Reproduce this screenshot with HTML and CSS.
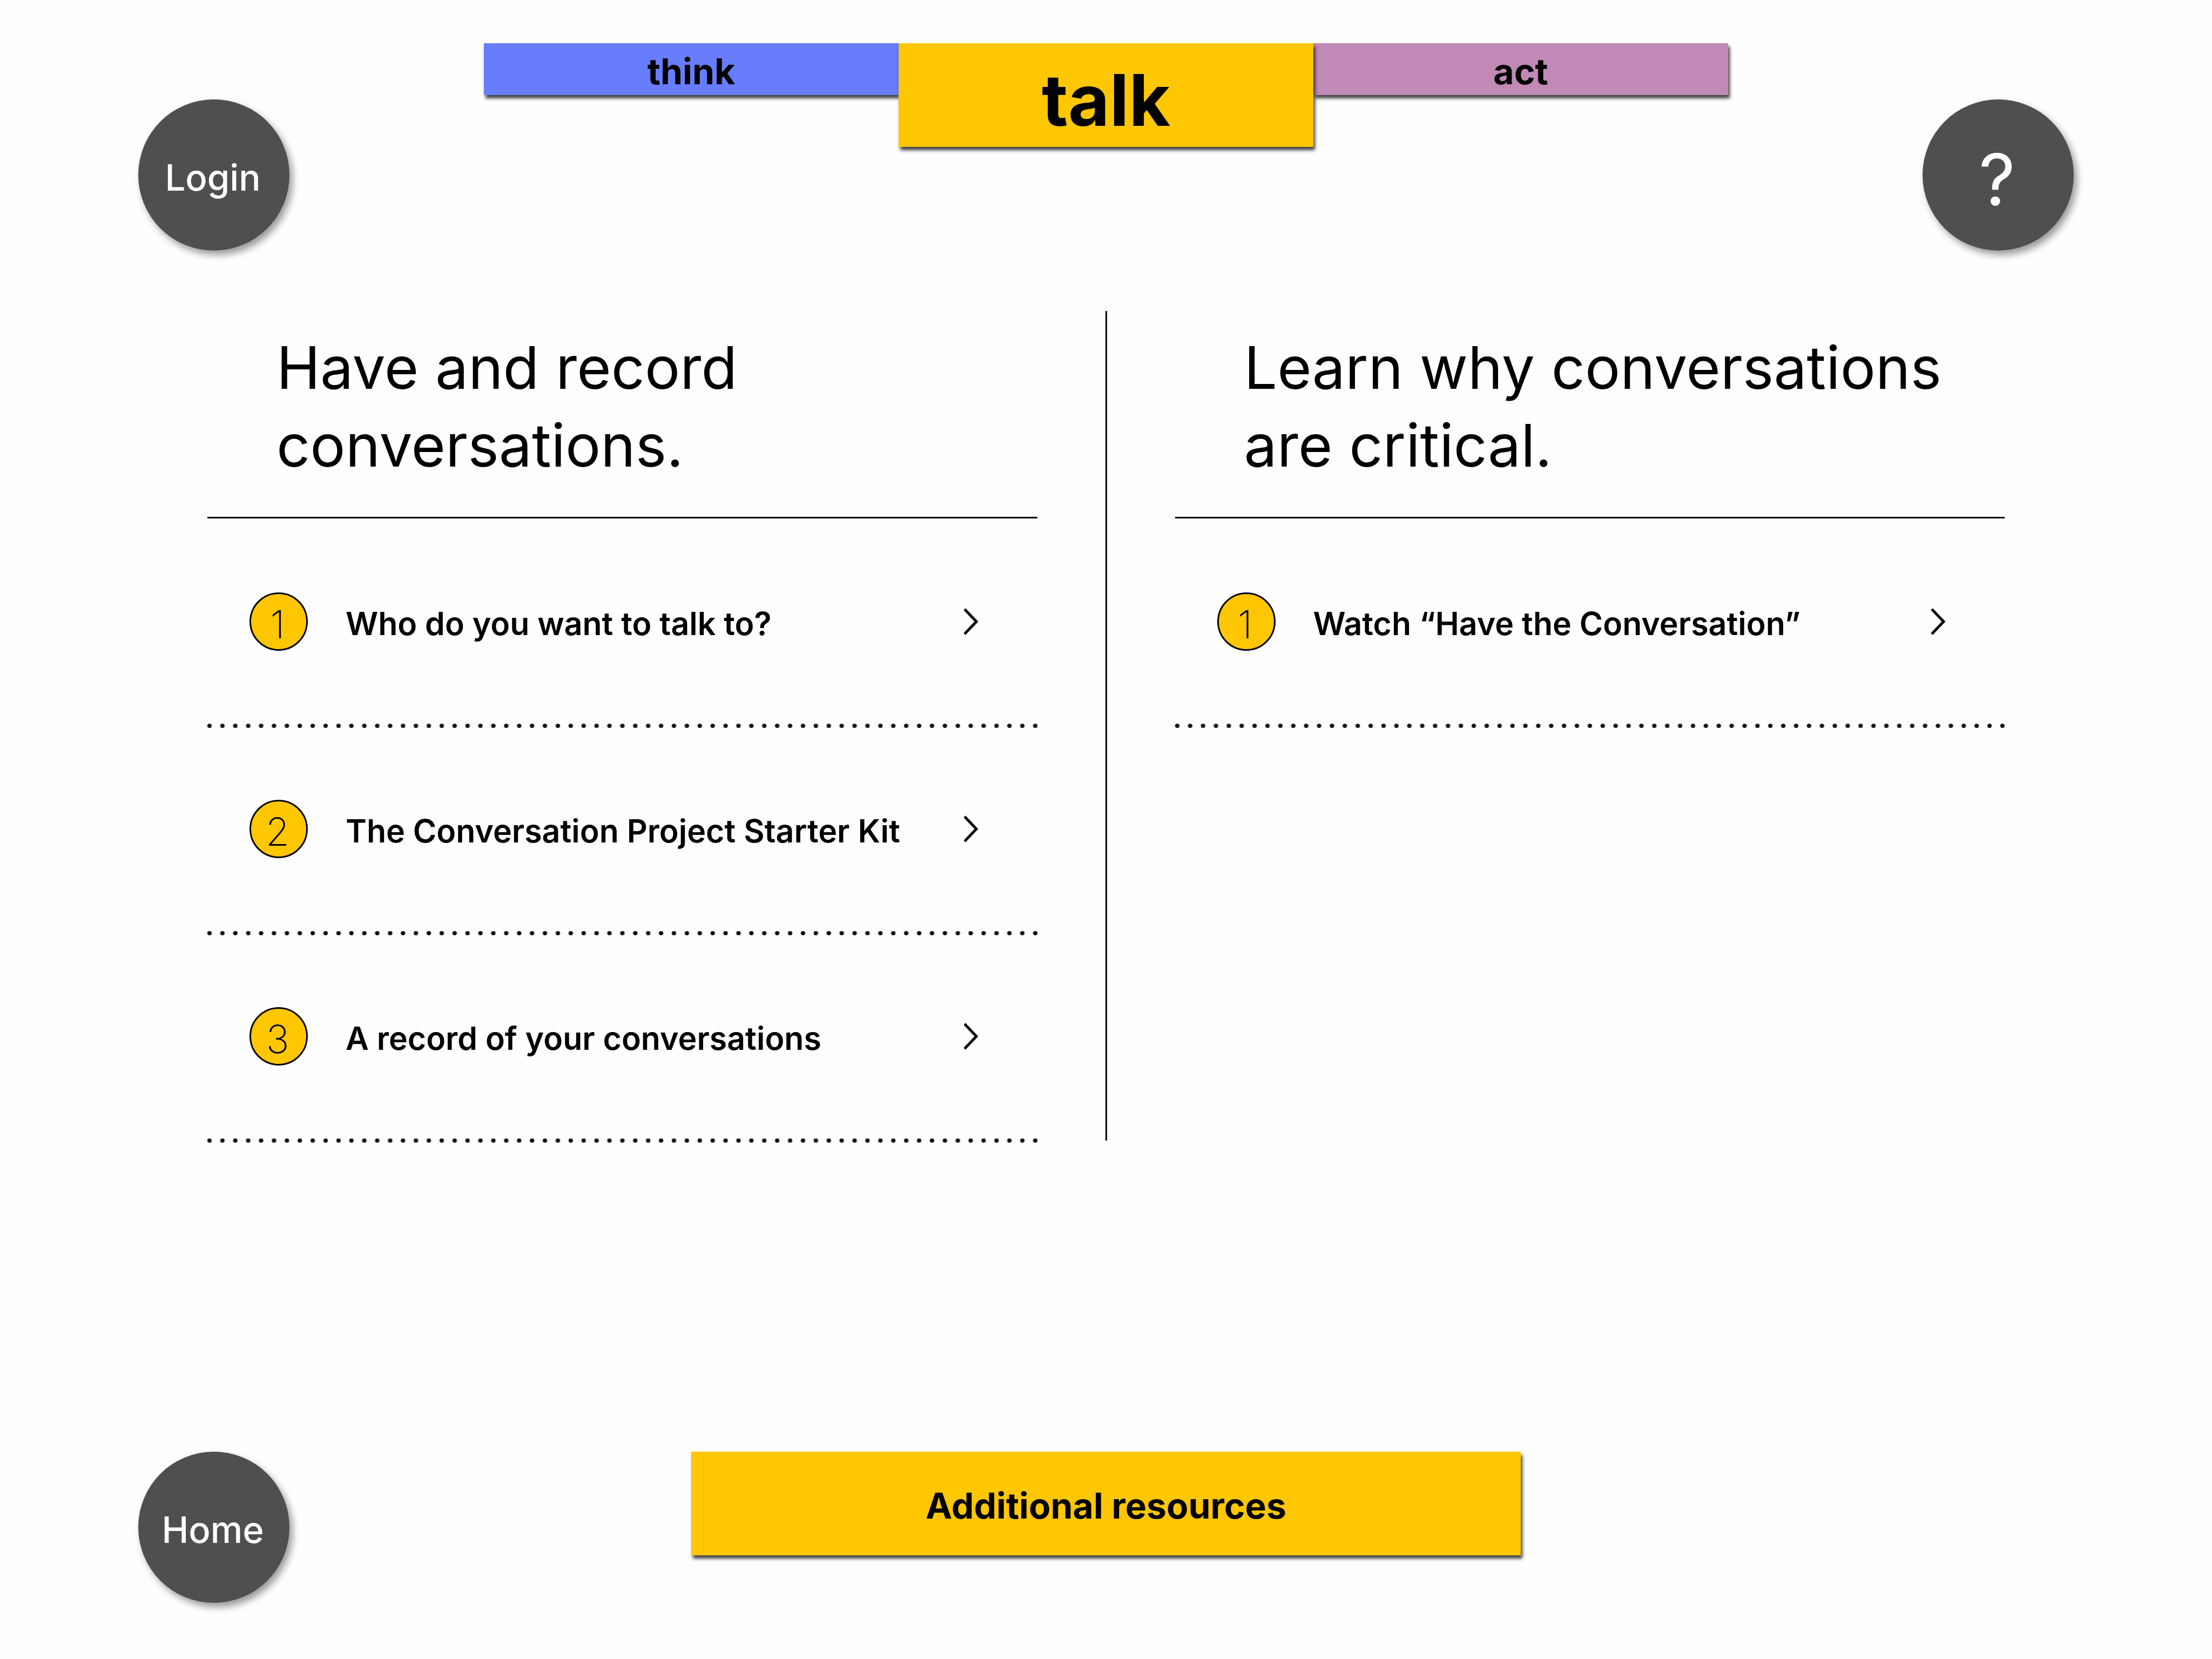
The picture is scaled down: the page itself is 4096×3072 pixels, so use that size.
FILE: index.html
```html
<!DOCTYPE html>
<html lang="en">
<head>
  <meta charset="utf-8">
  <meta name="viewport" content="width=device-width, initial-scale=1">
  <title>Talk</title>
  <link rel="stylesheet" href="styles.css">
</head>
<body>
  <header class="top">
    <button class="round" type="button">Login</button>
    <nav class="tabs">
      <a class="tab tab-think" href="#think">think</a>
      <a class="tab tab-talk" href="#talk" aria-current="page">talk</a>
      <a class="tab tab-act" href="#act">act</a>
    </nav>
    <button class="round round-help" type="button" aria-label="Help">?</button>
  </header>

  <main class="columns">
    <section class="column">
      <h2 class="heading">Have and record conversations.</h2>
      <ol class="steps">
        <li><a class="step" href="#who">
          <span class="number">1</span>
          <span class="label">Who do you want to talk to?</span>
          <svg class="chevron" viewBox="0 0 26 50" aria-hidden="true"><path d="M1 2 23 25 1 48"/></svg>
        </a></li>
        <li><a class="step" href="#kit">
          <span class="number">2</span>
          <span class="label">The Conversation Project Starter Kit</span>
          <svg class="chevron" viewBox="0 0 26 50" aria-hidden="true"><path d="M1 2 23 25 1 48"/></svg>
        </a></li>
        <li><a class="step" href="#record">
          <span class="number">3</span>
          <span class="label">A record of your conversations</span>
          <svg class="chevron" viewBox="0 0 26 50" aria-hidden="true"><path d="M1 2 23 25 1 48"/></svg>
        </a></li>
      </ol>
    </section>
    <div class="divider"></div>
    <section class="column">
      <h2 class="heading">Learn why conversations are critical.</h2>
      <ol class="steps">
        <li><a class="step" href="#watch">
          <span class="number">1</span>
          <span class="label">Watch “Have the Conversation”</span>
          <svg class="chevron" viewBox="0 0 26 50" aria-hidden="true"><path d="M1 2 23 25 1 48"/></svg>
        </a></li>
      </ol>
    </section>
  </main>

  <footer class="bottom">
    <a class="round" href="#home">Home</a>
    <button class="resources" type="button">Additional resources</button>
  </footer>
</body>
</html>
```
FILE: styles.css
```css
:root {
  --yellow: #ffc602;
  --blue: #687dfb;
  --purple: #c089b6;
  --grey: #4f4f4f;
  --line: 3px solid #000;
  --card-shadow: 3px 6px 6px rgba(0, 0, 0, 0.75);
}

* {
  box-sizing: border-box;
}

body {
  display: flex;
  flex-direction: column;
  min-height: 100vh;
  margin: 0;
  background: #fefefe;
  color: #000;
  font-family: Inter, "Liberation Sans", sans-serif;
}

a {
  color: inherit;
  text-decoration: none;
}

button {
  border: 0;
  font-family: inherit;
  color: inherit;
}

/* Header */
.top {
  display: grid;
  grid-template-columns: 5fr 18fr 5fr;
  align-items: start;
  padding: 80px 6.25% 0;
}

.round {
  display: flex;
  align-items: center;
  justify-content: center;
  width: 280px;
  height: 280px;
  padding: 8px 4px 0 0;
  border-radius: 50%;
  background: var(--grey);
  box-shadow: 6px 8px 14px rgba(0, 0, 0, 0.4);
  color: #fff;
  font-size: 67px;
  font-weight: 500;
}

.top .round {
  margin-top: 104px;
}

.round-help {
  justify-self: end;
  padding-top: 16px;
  font-size: 132px;
  font-weight: 400;
}

.tabs {
  display: grid;
  grid-template-columns: repeat(3, 1fr);
  align-items: start;
}

.tab {
  display: flex;
  align-items: center;
  justify-content: center;
  height: 96px;
  padding-top: 8px;
  box-shadow: var(--card-shadow);
  font-size: 66px;
  font-weight: 700;
}

.tab-think {
  background: var(--blue);
}

.tab-talk {
  z-index: 1;
  height: 192px;
  padding-top: 18px;
  background: var(--yellow);
  font-size: 132px;
}

.tab-act {
  background: var(--purple);
}

/* Two lists with a rule between them */
.columns {
  display: grid;
  grid-template-columns: 1fr 3px 1fr;
  column-gap: 126px;
  margin-top: 112px;
  padding: 0 9.375%;
}

.divider {
  background: #000;
}

.heading {
  margin: 0;
  padding: 32px 64px 61px 128px;
  border-bottom: var(--line);
  font-size: 109px;
  font-weight: 400;
  line-height: 144px;
}

.steps {
  margin: 4px -8px -4px;
  padding: 0;
  list-style: none;
}

.step {
  display: flex;
  align-items: center;
  height: 384px;
  padding: 0 118px 10px 86px;
  background: radial-gradient(circle at center, #000 3px, transparent 5px) left bottom / 24px 8px;
  background-repeat: round no-repeat;
}

.number {
  display: flex;
  align-items: center;
  justify-content: center;
  width: 108px;
  height: 108px;
  padding: 8px 4px 0 0;
  border: var(--line);
  border-radius: 50%;
  background: var(--yellow);
  font-size: 72px;
  font-weight: 200;
}

.label {
  flex: 1;
  padding: 6px 0 0 70px;
  font-size: 59px;
  font-weight: 600;
}

.chevron {
  width: 26px;
  height: 50px;
  fill: none;
  stroke: #000;
  stroke-width: 5px;
}

/* Footer */
.bottom {
  display: grid;
  grid-template-columns: 2fr 3fr 2fr;
  align-items: start;
  margin-top: auto;
  padding: 0 6.25% 104px;
}

.resources {
  height: 192px;
  padding: 8px 0 0;
  background: var(--yellow);
  box-shadow: var(--card-shadow);
  font-size: 66px;
  font-weight: 700;
}
```
